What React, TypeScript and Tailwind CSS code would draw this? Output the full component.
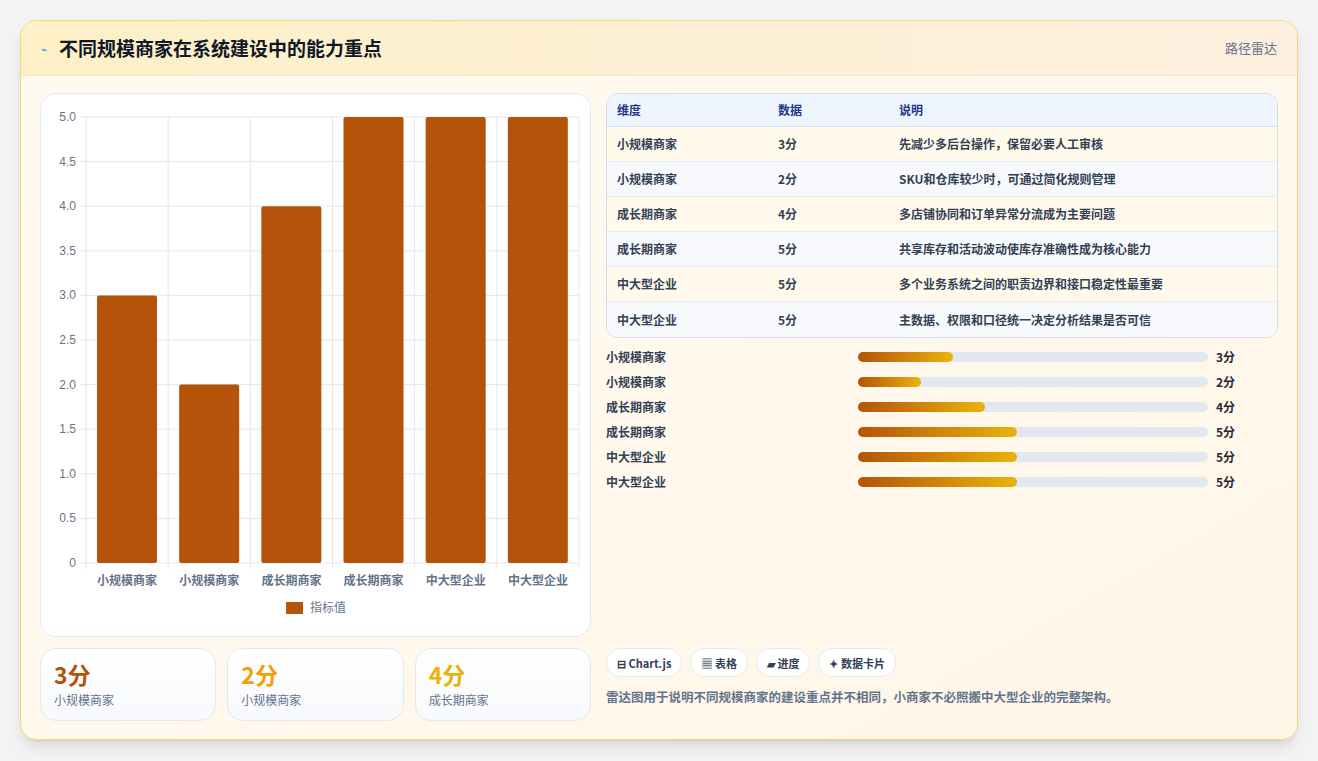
import React from "react";

const F = { fontFamily: '"Noto Sans CJK SC", "Noto Sans", sans-serif' };
const rows = [
  ["小规模商家", "3分", "先减少多后台操作，保留必要人工审核"],
  ["小规模商家", "2分", "SKU和仓库较少时，可通过简化规则管理"],
  ["成长期商家", "4分", "多店铺协同和订单异常分流成为主要问题"],
  ["成长期商家", "5分", "共享库存和活动波动使库存准确性成为核心能力"],
  ["中大型企业", "5分", "多个业务系统之间的职责边界和接口稳定性最重要"],
  ["中大型企业", "5分", "主数据、权限和口径统一决定分析结果是否可信"],
];
const vals = [3, 2, 4, 5, 5, 5];
const fills = [95, 63, 127, 159, 159, 159];

function Chart() {
  const x0 = 45, x1 = 538, yTop = 23, yBot = 469;
  const cw = (x1 - x0) / 6;
  const ticks = [0, 0.5, 1, 1.5, 2, 2.5, 3, 3.5, 4, 4.5, 5];
  const y = (v: number) => yBot - (v / 5) * (yBot - yTop);
  return (
    <svg width="550" height="543" style={F}>
      {ticks.map((t) => (
        <g key={t}>
          <line x1={x0 - 6} x2={x1} y1={y(t)} y2={y(t)} stroke="#e5e7eb" />
          <text x={x0 - 10} y={y(t) + 4} fontSize="12" fill="#6b7280" textAnchor="end" style={{ fontFamily: '"Liberation Sans", sans-serif' }}>
            {t === 0 ? "0" : t.toFixed(1)}
          </text>
        </g>
      ))}
      {Array.from({ length: 7 }).map((_, i) => (
        <line key={i} x1={x0 + i * cw} x2={x0 + i * cw} y1={yTop} y2={yBot + 6} stroke="#e5e7eb" />
      ))}
      {vals.map((v, i) => (
        <rect key={i} x={x0 + i * cw + 11} y={y(v)} width={60} height={yBot - y(v)} rx="2" fill="#b45309" />
      ))}
      {rows.map((r, i) => (
        <text key={i} x={x0 + i * cw + cw / 2} y={491} fontSize="12" fontWeight="600" fill="#64748b" textAnchor="middle">
          {r[0]}
        </text>
      ))}
      <rect x="245" y="508" width="17" height="12" fill="#b45309" />
      <text x="269" y="518" fontSize="12" fill="#64748b">指标值</text>
    </svg>
  );
}

export default function App() {
  return (
    <div className="min-h-[761px] bg-[#f3f3f3] pt-5 px-5 pb-5" style={F}>
      <div className="w-[1278px] h-[720px] rounded-2xl border border-[#f4d67c] bg-gradient-to-br from-[#fffaf0] to-[#fff6e8] shadow-lg overflow-hidden flex flex-col">
        <div className="h-[55px] shrink-0 flex items-center justify-between px-5 bg-gradient-to-r from-[#fdf0c6] to-[#fdefdf] border-b border-[#f1e6cf]">
          <div className="flex items-center gap-3">
            <span className="text-[#3b82f6] text-[10px]">⌁</span>
            <span className="text-[19px] font-bold text-[#111827]">不同规模商家在系统建设中的能力重点</span>
          </div>
          <span className="text-[13px] text-[#64748b]">路径雷达</span>
        </div>
        <div className="flex gap-[15px] px-[19px] pt-[17px]">
          <div className="w-[551px] flex flex-col gap-[11px]">
            <div className="h-[544px] rounded-2xl bg-white border border-[#e5e9f0]">
              <Chart />
            </div>
            <div className="grid grid-cols-3 gap-[11px]">
              {[
                ["3分", "小规模商家", "text-[#b45309]"],
                ["2分", "小规模商家", "text-[#f59e0b]"],
                ["4分", "成长期商家", "text-[#eab308]"],
              ].map(([a, b, c]) => (
                <div key={b + a} className="h-[73px] rounded-2xl border border-[#e3e8f0] bg-gradient-to-b from-white to-[#f7f9fc] px-[13px] pt-[10px]">
                  <div className={`text-[23px] font-bold leading-[30px] ${c}`}>{a}</div>
                  <div className="text-[12px] text-[#64748b] mt-[2px]">{b}</div>
                </div>
              ))}
            </div>
          </div>
          <div className="flex-1 flex flex-col">
            <div className="rounded-xl border border-[#d5dde8] overflow-hidden bg-white">
              <div className="grid grid-cols-[161px_121px_1fr] h-[33px] items-center bg-[#eef5ff] border-b border-[#d5dde8] text-[12px] font-semibold text-[#1e3a8a] px-[10px]">
                <span>维度</span><span>数据</span><span>说明</span>
              </div>
              {rows.map((r, i) => (
                <div key={i} className={`grid grid-cols-[161px_121px_1fr] h-[35px] items-center px-[10px] text-[12px] font-semibold text-[#334155] ${i % 2 === 0 ? "bg-[#fffaeb]" : "bg-[#f7f9fc]"} ${i < 5 ? "border-b border-[#e5e9f0]" : ""}`}>
                  <span>{r[0]}</span><span>{r[1]}</span><span>{r[2]}</span>
                </div>
              ))}
            </div>
            <div className="flex flex-col gap-[11px] mt-[12px]">
              {rows.map((r, i) => (
                <div key={i} className="flex items-center h-[14px] text-[12px] font-semibold text-[#334155]">
                  <span className="w-[252px]">{r[0]}</span>
                  <div className="w-[350px] h-[10px] rounded-full bg-[#e2e8f0]">
                    <div className="h-full rounded-full bg-gradient-to-r from-[#b45309] to-[#eab308]" style={{ width: fills[i] }} />
                  </div>
                  <span className="ml-[8px] text-[#1f2937]">{r[1]}</span>
                </div>
              ))}
            </div>
            <div className="mt-auto flex gap-[8px] mb-[11px]">
              {["⊟ Chart.js", "▦ 表格", "▰ 进度", "✦ 数据卡片"].map((t) => (
                <span key={t} className="h-[29px] px-[10px] flex items-center rounded-full bg-white border border-[#e5e9f0] text-[11px] font-semibold text-[#334155]">{t}</span>
              ))}
            </div>
            <div className="text-[12.5px] font-semibold text-[#64748b] mb-[14px]">雷达图用于说明不同规模商家的建设重点并不相同，小商家不必照搬中大型企业的完整架构。</div>
          </div>
        </div>
      </div>
    </div>
  );
}
